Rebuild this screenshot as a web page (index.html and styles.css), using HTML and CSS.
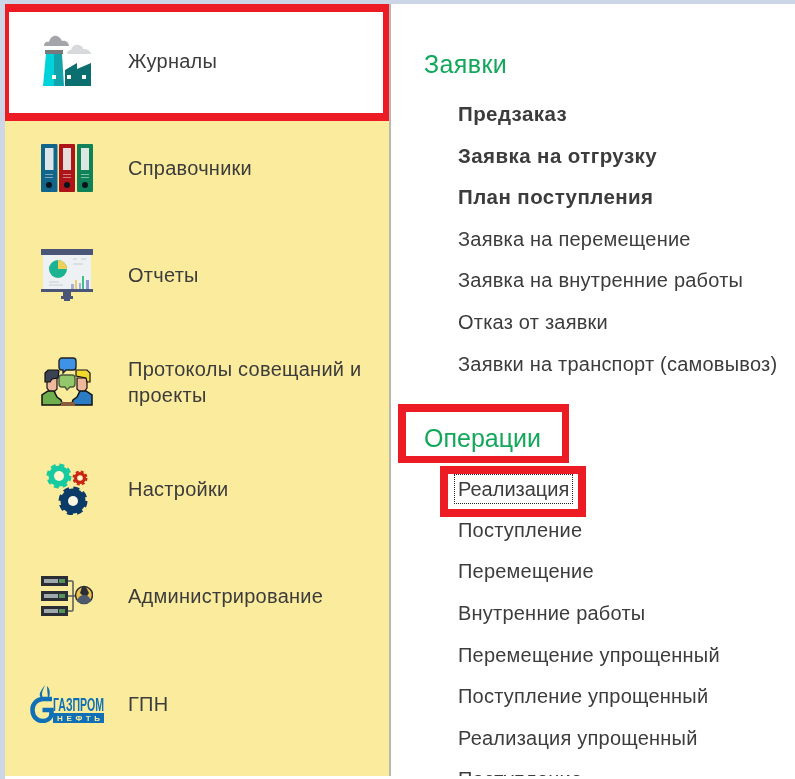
FILE: index.html
```html
<!DOCTYPE html>
<html lang="ru">
<head>
<meta charset="utf-8">
<title>Журналы</title>
<link rel="stylesheet" href="styles.css">
</head>
<body>
<div class="app">
  <nav class="side">
    <a class="nav-item active">
      <span class="ico">
        <svg width="48" height="52" viewBox="0 0 48 52">
          <path fill="#a3a5a8" d="M1 11c0-3 2-5 5-4 1-4 4-7 8-6 3 1 4 3 5 5 4-1 7 2 7 5z"/>
          <path fill="#d8d9dc" d="M24 19c0-3 2-4 4-4 1-4 4-6 8-5 3 1 4 2 4 4 4 0 8 2 8 5z"/>
          <rect x="2" y="15" width="18" height="4" fill="#77797c"/>
          <path fill="#00d2da" d="M3 19h8v32H0z"/>
          <path fill="#13a3ab" d="M11 19h8l2 32H11z"/>
          <path fill="#0b6f70" d="M22 35l12-7v6l14-6v23H22z"/>
          <rect x="9" y="40" width="4" height="4" fill="#fff"/>
          <rect x="24" y="40" width="4" height="4" fill="#fff"/>
          <rect x="39" y="40" width="4" height="4" fill="#fff"/>
        </svg>
      </span>
      <span class="label">Журналы</span>
    </a>
    <a class="nav-item">
      <span class="ico">
        <svg width="52" height="48" viewBox="0 0 52 48">
          <rect x="0" y="0" width="16.5" height="48" rx="1" fill="#11658a"/>
          <rect x="18" y="0" width="16" height="48" rx="1" fill="#ad1518"/>
          <rect x="36" y="0" width="16" height="48" rx="1" fill="#118258"/>
          <rect x="4" y="4" width="8.5" height="22" fill="#dce5e7"/>
          <rect x="22" y="4" width="8" height="22" fill="#e6dcdc"/>
          <rect x="40" y="4" width="8" height="22" fill="#dce7e2"/>
          <path stroke="#7fa6b8" stroke-width="1" d="M4 30.500h8M4 33.500h8"/>
          <path stroke="#cf7f80" stroke-width="1" d="M22 30.500h8M22 33.500h8"/>
          <path stroke="#7fbfa4" stroke-width="1" d="M40 30.500h8M40 33.500h8"/>
          <circle cx="8" cy="41" r="3" fill="#08141c"/>
          <circle cx="26" cy="41" r="3" fill="#08141c"/>
          <circle cx="44" cy="41" r="3" fill="#08141c"/>
        </svg>
      </span>
      <span class="label">Справочники</span>
    </a>
    <a class="nav-item">
      <span class="ico">
        <svg width="52" height="52" viewBox="0 0 52 52">
          <rect x="2" y="4" width="48" height="38" fill="#eef1f3"/>
          <rect y="0" width="52" height="6" fill="#4b5577"/>
          <rect y="40" width="52" height="3" fill="#4b5577"/>
          <path fill="#4b5577" d="M22 43h8v4h2v3h-3v2h-6v-2h-3v-3h2z"/>
          <circle cx="17" cy="20" r="9" fill="#1cb392"/>
          <path fill="#efcf5a" d="M17 11a9 9 0 0 1 9 9h-9z"/>
          <path stroke="#c6ccd2" stroke-width="1" d="M32 10h4M40 10h5M32 15h10M8 33h10M8 36h14"/>
          <rect x="30" y="35" width="3" height="5" fill="#a5afd9"/>
          <rect x="34" y="31" width="2" height="9" fill="#eccf5e"/>
          <rect x="38" y="34" width="2" height="6" fill="#a5afd9"/>
          <rect x="41" y="27" width="2" height="13" fill="#43bd88"/>
          <rect x="45" y="31" width="3" height="9" fill="#8f9bd0"/>
        </svg>
      </span>
      <span class="label">Отчеты</span>
    </a>
    <a class="nav-item">
      <span class="ico">
        <svg width="52" height="50" viewBox="0 0 52 50">
          <path fill="#3f93e6" stroke="#222" stroke-width="1.4" d="M21 1h11a3 3 0 0 1 3 3v6a3 3 0 0 1-3 3h-7l-3 3v-3h-1a3 3 0 0 1-3-3V4a3 3 0 0 1 3-3z"/>
          <path fill="#93c76c" stroke="#4a5a3a" stroke-width="1.4" d="M21 18h10a3 3 0 0 1 3 3v6a3 3 0 0 1-3 3h-2l-3 3-2-3h-3a3 3 0 0 1-3-3v-6a3 3 0 0 1 3-3z"/>
          <path fill="#f0b89c" stroke="#111" stroke-width="1.2" d="M6 21h10v11l-3 3H9l-3-4z"/>
          <path fill="#3b4254" stroke="#111" stroke-width="1.2" d="M4 25v-9l3-3h10l1 1-1 7-6 1-2 3z"/>
          <path fill="#6fae4c" stroke="#111" stroke-width="1.500" d="M1 48V38l6-4h6l3 6 4 3 1 3-2 2z"/>
          <path fill="#f0b89c" stroke="#111" stroke-width="1.2" d="M36 21h10v10l-3 4h-4l-3-3z"/>
          <path fill="#f2d72c" stroke="#111" stroke-width="1.2" d="M35 13h11l3 3v9h-3l-1-4-10-2z"/>
          <path fill="#2b7cc4" stroke="#111" stroke-width="1.500" d="M51 48V38l-6-4h-6l-3 6-4 3-1 3 2 2z"/>
          <rect x="20" y="45" width="14" height="4" fill="#8a5a3c"/>
        </svg>
      </span>
      <span class="label">Протоколы совещаний и проекты</span>
    </a>
    <a class="nav-item">
      <span class="ico">
        <svg width="42" height="52" viewBox="0 0 42 52">
          <circle cx="13" cy="13" r="10.5" fill="#16cba0"/>
          <circle cx="13" cy="13" r="11.2" fill="none" stroke="#16cba0" stroke-width="2.6" stroke-dasharray="5 3.8"/>
          <circle cx="13" cy="13" r="5" fill="#fdf6cf"/>
          <circle cx="34" cy="15" r="6" fill="#c9260f"/>
          <circle cx="34" cy="15" r="6.5" fill="none" stroke="#c9260f" stroke-width="2" stroke-dasharray="3 2.1"/>
          <circle cx="34" cy="15" r="2.8" fill="#fdf6cf"/>
          <circle cx="27" cy="38" r="12.500" fill="#0b3b66"/>
          <circle cx="27" cy="38" r="13" fill="none" stroke="#0b3b66" stroke-width="3" stroke-dasharray="6 4.2"/>
          <circle cx="27" cy="38" r="5" fill="#fdf6e0"/>
        </svg>
      </span>
      <span class="label">Настройки</span>
    </a>
    <a class="nav-item">
      <span class="ico">
        <svg width="52" height="40" viewBox="0 0 52 40">
          <g fill="#2a2d33">
            <rect width="27" height="10"/>
            <rect y="15" width="27" height="10"/>
            <rect y="30" width="27" height="10"/>
          </g>
          <g fill="#9fa8ad">
            <rect x="3" y="3" width="14" height="4"/>
            <rect x="3" y="18" width="14" height="4"/>
            <rect x="3" y="33" width="14" height="4"/>
          </g>
          <g fill="#57915c">
            <rect x="18" y="3" width="6" height="4"/>
            <rect x="18" y="18" width="6" height="4"/>
            <rect x="18" y="33" width="6" height="4"/>
          </g>
          <path fill="none" stroke="#55585a" stroke-width="1.500" d="M27 5h4a1 1 0 0 1 1 1v28a1 1 0 0 1-1 1h-4M27 20h7"/>
          <circle cx="43" cy="19" r="8.500" fill="#eec24f" stroke="#2a2d33" stroke-width="1.500"/>
          <path fill="#2a2d33" d="M41 11h4l3 6-2 3h-4l-3-3z"/>
          <path fill="#4d5a6e" d="M36 25c1-4 4-6 7-6s6 2 7 6c-2 2-4 3-7 3s-5-1-7-3z"/>
        </svg>
      </span>
      <span class="label">Администрирование</span>
    </a>
    <a class="nav-item">
      <span class="ico">
        <svg width="74" height="38" viewBox="0 0 74 38">
          <path fill="#0f70b8" d="M15 0c-1 3-3 6-3 9 0 2 1 4 2 6-3-1-5-4-4-7 1-3 3-5 5-8zM17 1c3 3 4 8 1 14 0-5-1-9-1-14z"/>
          <path fill="none" stroke="#0f70b8" stroke-width="4.500" d="M22 14H13A10.500 10.500 0 0 0 2.500 25c0 7 5 11 10 11 5 0 9-3 9-8v-3h-9"/>
          <rect x="23" y="28" width="51" height="10" fill="#0f70b8"/>
          <text class="gpn-top" x="23" y="26" textLength="51" lengthAdjust="spacingAndGlyphs">ГАЗПРОМ</text>
          <text class="gpn-bot" x="27" y="36" textLength="43">НЕФТЬ</text>
        </svg>
      </span>
      <span class="label">ГПН</span>
    </a>
  </nav>
  <main class="menu">
    <h2 class="group">Заявки</h2>
    <ul class="list">
      <li class="bold">Предзаказ</li>
      <li class="bold">Заявка на отгрузку</li>
      <li class="bold">План поступления</li>
      <li>Заявка на перемещение</li>
      <li>Заявка на внутренние работы</li>
      <li>Отказ от заявки</li>
      <li>Заявки на транспорт (самовывоз)</li>
    </ul>
    <h2 class="group group-second">Операции</h2>
    <ul class="list">
      <li><span class="focus">Реализация</span></li>
      <li>Поступление</li>
      <li>Перемещение</li>
      <li>Внутренние работы</li>
      <li>Перемещение упрощенный</li>
      <li>Поступление упрощенный</li>
      <li>Реализация упрощенный</li>
      <li>Поступление</li>
    </ul>
  </main>
  <div class="mark mark-nav"></div>
  <div class="mark mark-group"></div>
  <div class="mark mark-item"></div>
</div>
</body>
</html>
```

FILE: styles.css
```css
* { box-sizing: border-box; }
html, body { margin: 0; height: 100%; background: #fff; overflow: hidden; }
body { font-family: "Liberation Sans", Arial, sans-serif; color: #3c3c3c; }

.app {
  position: relative;
  display: flex;
  width: 795px;
  height: 779px;
  padding: 4px 0 0 5px;
  background: linear-gradient(#ccd6e6, #ccd6e6) left top / 5px 100% no-repeat,
              linear-gradient(#ccd6e6, #ccd6e6) left top / 100% 4px no-repeat,
              #fff;
  overflow: hidden;
  filter: blur(0.35px);
}

.side {
  flex: none;
  width: 386px;
  height: 772px;
  background: #fbeb9d;
  border-right: 2px solid #b9b9b2;
  display: flex;
  flex-direction: column;
}
.nav-item {
  flex: none;
  height: 107.1px;
  display: flex;
  align-items: center;
  font-size: 20px;
  line-height: 26px;
  letter-spacing: 0.26px;
}
.nav-item.active { height: 110.5px; padding-top: 3px; background: #fff; }
.ico {
  flex: none;
  width: 123px;
  display: flex;
  justify-content: center;
  align-items: center;
}
.ico svg { display: block; }
.label { padding-right: 18px; }

.gpn-top { font: bold 18px "Liberation Sans", sans-serif; fill: #0f70b8; letter-spacing: 0; }
.gpn-bot { font: bold 8px "Liberation Sans", sans-serif; fill: #fbeb9d; letter-spacing: 0; }

.menu { flex: 1; height: 772px; overflow: hidden; padding: 46px 0 0 33px; }
.group {
  margin: 0;
  font-size: 25px;
  line-height: 29px;
  font-weight: 400;
  color: #12a85a;
  letter-spacing: 0.4px;
}
.group-second { margin-top: 39px; letter-spacing: 0; }
.list { list-style: none; margin: 15px 0 0 34px; padding: 0; white-space: nowrap; }
.list li { height: 41.6px; font-size: 20px; line-height: 41.6px; letter-spacing: 0.22px; }
.list .bold { font-size: 20.5px; line-height: 40px; font-weight: 700; letter-spacing: 0.42px; }
.focus {
  display: inline-block;
  height: 28px;
  line-height: 28px;
  margin: 6.4px 0 0 -3px;
  padding: 0 3px;
  outline: 1px dotted #222;
  vertical-align: top;
  letter-spacing: 0;
}

.mark { position: absolute; border: solid #ed1c24; pointer-events: none; }
.mark-nav { left: 5px; top: 4px; width: 384px; height: 117px; border-width: 8px 6px 8px 4px; }
.mark-group { left: 398px; top: 404px; width: 171px; height: 59px; border-width: 8px 7px 7px 8px; }
.mark-item { left: 440px; top: 466px; width: 146px; height: 51px; border-width: 8px; }
```
